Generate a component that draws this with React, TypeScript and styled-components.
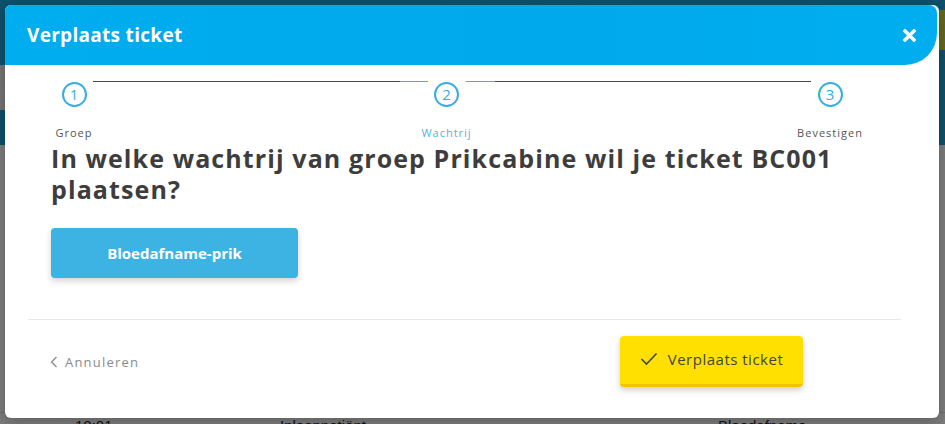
import React from "react";
import styled, { createGlobalStyle } from "styled-components";

const Global = createGlobalStyle`
  html, body { margin: 0; padding: 0; }
  body { width: 945px; height: 424px; overflow: hidden; font-family: "Open Sans", "Liberation Sans", sans-serif; background: #fff; }
  * { box-sizing: border-box; }
`;

const Page = styled.div`
  position: relative;
  width: 945px;
  height: 424px;
  overflow: hidden;
  background: #f4f4f4;
  display: flex;
  flex-direction: column;
`;

const TopBar = styled.div`
  height: 50px;
  background: #1aa3d6;
  display: flex;
  justify-content: flex-end;
  align-items: flex-start;
  padding-top: 10px;
`;

const TopAccent = styled.div`
  width: 70px;
  height: 40px;
  background: #c9d23a;
`;

const SubBar = styled.div`
  height: 60px;
  display: flex;
`;

const SubFill = styled.div<{ $tone: "light" | "brand" }>`
  flex: ${(p) => (p.$tone === "light" ? 1 : "0 0 90px")};
  display: flex;
  flex-direction: column;
  background: ${(p) => (p.$tone === "light" ? "#ececec" : "#1aa3d6")};
`;

const SubTop = styled.div`
  height: 15px;
  background: #1aa3d6;
`;

const TabBar = styled.div`
  height: 35px;
  background: #1aa3d6;
`;

const PageBody = styled.div`
  flex: 1;
  display: flex;
  flex-direction: column;
  justify-content: flex-end;
  background: #fafafa;
`;

const PageRow = styled.div`
  display: grid;
  grid-template-columns: 205px 438px 1fr;
  padding-left: 75px;
  height: 22px;
  font-family: "Liberation Sans", Arial, sans-serif;
  font-size: 15px;
  color: #222;
  border-top: 1px solid #ddd;
  align-items: start;
  padding-top: 4px;
  margin-bottom: -10px;
`;

const Backdrop = styled.div`
  position: absolute;
  inset: 0;
  background: rgba(0, 0, 0, 0.5);
`;

const Modal = styled.div`
  position: absolute;
  left: 5px;
  top: 5px;
  width: 934px;
  height: 413px;
  background: #fff;
  border-radius: 6px;
  display: flex;
  flex-direction: column;
  box-shadow: 0 4px 16px rgba(0, 0, 0, 0.25);
`;

const Header = styled.div`
  height: 60px;
  margin-right: 2px;
  background: linear-gradient(90deg, #00adee 0%, #00a9ec 60%, #00aeef 100%);
  border-radius: 6px 8px 32px 0;
  display: flex;
  align-items: center;
  justify-content: space-between;
  padding: 0 20px 0 22px;
`;

const Title = styled.h1`
  margin: 0;
  color: #fff;
  font-family: "Open Sans", sans-serif;
  font-weight: 700;
  font-size: 19px;
  letter-spacing: 0.3px;
`;

const CloseButton = styled.button`
  background: none;
  border: none;
  padding: 0;
  width: 16px;
  height: 16px;
  display: flex;
  align-items: center;
  justify-content: center;
  cursor: pointer;
`;

const Body = styled.div`
  flex: 1;
  display: flex;
  flex-direction: column;
  padding: 0 23px 0 23px;
`;

const Stepper = styled.div`
  display: flex;
  align-items: flex-start;
  padding: 11px 0 0 27px;
  width: 821px;
`;

const Step = styled.div`
  width: 38px;
  display: flex;
  flex-direction: column;
  align-items: center;
  padding-top: 6px;
`;

const Circle = styled.div`
  width: 25px;
  height: 25px;
  border-radius: 50%;
  border: 2px solid #35aee2;
  color: #35aee2;
  display: flex;
  align-items: center;
  justify-content: center;
  font-family: "Open Sans", sans-serif;
  font-size: 15px;
  line-height: 1;
`;

const StepLabel = styled.div<{ $active?: boolean }>`
  margin-top: 18px;
  white-space: nowrap;
  font-family: "Open Sans", sans-serif;
  font-size: 11px;
  letter-spacing: 1px;
  color: ${(p) => (p.$active ? "#4bb5e6" : "#555")};
`;

const Connector = styled.div<{ $side: "left" | "right" }>`
  flex: ${(p) => (p.$side === "left" ? 335 : 346)};
  height: 1px;
  margin-top: 5px;
  background: ${(p) =>
    p.$side === "left"
      ? "linear-gradient(90deg, #4a4a4a 0, #4a4a4a calc(100% - 28px), #3fb0e3 calc(100% - 28px))"
      : "linear-gradient(90deg, #3fb0e3 0, #3fb0e3 29px, #4a4a4a 29px)"};
`;

const Question = styled.h2`
  margin: 3px 0 0 23px;
  font-family: "Open Sans", sans-serif;
  font-weight: 700;
  font-size: 25px;
  line-height: 31px;
  color: #3d3d3d;
  letter-spacing: 1.1px;
  max-width: 820px;
`;

const OptionList = styled.div`
  display: flex;
  gap: 12px;
  margin: 23px 0 0 23px;
`;

const OptionButton = styled.button`
  width: 247px;
  height: 50px;
  border: none;
  border-radius: 4px;
  background: #3db3e4;
  color: #fff;
  font-family: "Open Sans", sans-serif;
  font-weight: 700;
  font-size: 15px;
  box-shadow: 0 3px 6px rgba(0, 0, 0, 0.18);
  cursor: pointer;
`;

const Divider = styled.hr`
  margin: 41px 15px 0 0;
  border: none;
  border-top: 1px solid #e6e9f0;
`;

const Footer = styled.div`
  display: flex;
  align-items: center;
  justify-content: space-between;
  padding: 16px 113px 0 22px;
`;

const CancelLink = styled.button`
  background: none;
  border: none;
  padding: 0;
  display: flex;
  align-items: center;
  gap: 7px;
  font-family: "Open Sans", sans-serif;
  font-size: 13px;
  letter-spacing: 1.2px;
  color: #8a8a8a;
  cursor: pointer;
`;

const ConfirmButton = styled.button`
  width: 183px;
  height: 51px;
  border: none;
  border-bottom: 3px solid #f0c400;
  border-radius: 4px;
  background: #ffe000;
  color: #444;
  font-family: "Open Sans", sans-serif;
  font-size: 15px;
  font-weight: 500;
  letter-spacing: 0.5px;
  display: flex;
  align-items: center;
  justify-content: center;
  gap: 10px;
  padding-bottom: 4px;
  box-shadow: 0 3px 6px rgba(0, 0, 0, 0.2);
  cursor: pointer;
`;

export default function App() {
  return (
    <>
      <Global />
      <Page>
        <TopBar>
          <TopAccent />
        </TopBar>
        <SubBar>
          <SubFill $tone="light">
            <SubTop />
          </SubFill>
          <SubFill $tone="brand" />
        </SubBar>
        <TabBar />
        <PageBody>
          <PageRow>
            <span>10:01</span>
            <span>Inloopnatiënt</span>
            <span>Bloedafname</span>
          </PageRow>
        </PageBody>
        <Backdrop />
        <Modal>
          <Header>
            <Title>Verplaats ticket</Title>
            <CloseButton aria-label="Sluiten">
              <svg width="13" height="13" viewBox="0 0 13 13">
                <path d="M2 2 L11 11 M11 2 L2 11" stroke="#fff" strokeWidth="3.4" strokeLinecap="square" />
              </svg>
            </CloseButton>
          </Header>
          <Body>
            <Stepper>
              <Step>
                <Circle>1</Circle>
                <StepLabel>Groep</StepLabel>
              </Step>
              <Connector $side="left" />
              <Step>
                <Circle>2</Circle>
                <StepLabel $active>Wachtrij</StepLabel>
              </Step>
              <Connector $side="right" />
              <Step>
                <Circle>3</Circle>
                <StepLabel>Bevestigen</StepLabel>
              </Step>
            </Stepper>
            <Question>In welke wachtrij van groep Prikcabine wil je ticket BC001 plaatsen?</Question>
            <OptionList>
              <OptionButton>Bloedafname-prik</OptionButton>
            </OptionList>
            <Divider />
            <Footer>
              <CancelLink>
                <svg width="8" height="12" viewBox="0 0 8 12">
                  <path d="M6.5 1 L1.5 6 L6.5 11" fill="none" stroke="#8a8a8a" strokeWidth="1.3" />
                </svg>
                Annuleren
              </CancelLink>
              <ConfirmButton>
                <svg width="18" height="14" viewBox="0 0 18 14">
                  <path d="M1.5 7 L6.5 12 L16.5 1.5" fill="none" stroke="#444" strokeWidth="1.6" />
                </svg>
                Verplaats ticket
              </ConfirmButton>
            </Footer>
          </Body>
        </Modal>
      </Page>
    </>
  );
}
